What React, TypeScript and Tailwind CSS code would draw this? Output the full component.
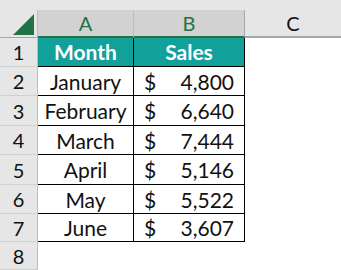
import React from "react";

const rows = [
  { m: "January", v: "4,800" },
  { m: "February", v: "6,640" },
  { m: "March", v: "7,444" },
  { m: "April", v: "5,146" },
  { m: "May", v: "5,522" },
  { m: "June", v: "3,607" },
];

const heights = ["h-[29px]", "h-[29px]", "h-[30px]", "h-[29px]", "h-[30px]", "h-[29px]", "h-[28px]", "h-[28px]"];

export default function App() {
  const font = { fontFamily: "Lato, 'Open Sans', sans-serif" };
  return (
    <div className="w-[341px] h-[270px] overflow-hidden bg-white text-[#111111]" style={font}>
      <div className="h-[10px] bg-[#e6e6e6]" />
      {/* column header */}
      <div className="flex h-[28px]">
        <div className="w-[38px] bg-[#e6e6e6] border-r border-[#bdbdbd] border-b border-b-[#a6a6a6] relative">
          <svg className="absolute left-[13px] top-[4px]" width="22" height="22" viewBox="0 0 22 22">
            <polygon points="0,21 21,21 21,0" fill="#217346" />
          </svg>
        </div>
        <div className="w-[96px] bg-[#d2d2d2] border-r border-[#bdbdbd] border-b-2 border-b-[#217346] flex items-center justify-center text-[20px] text-[#217346]">
          A
        </div>
        <div className="w-[111px] bg-[#d2d2d2] border-r border-[#a6a6a6] border-b-2 border-b-[#217346] flex items-center justify-center text-[20px] text-[#217346]">
          B
        </div>
        <div className="flex-1 bg-[#e6e6e6] border-b-2 border-b-[#a6a6a6] flex items-center justify-center text-[20px]">
          C
        </div>
      </div>
      {/* body */}
      {Array.from({ length: 8 }).map((_, i) => {
        const isHead = i === 0;
        const d = i >= 1 && i <= 6 ? rows[i - 1] : null;
        const inTable = i <= 6;
        return (
          <div key={i} className={`flex ${heights[i]}`}>
            <div className="w-[38px] shrink-0 bg-[#e6e6e6] border-r border-[#bdbdbd] border-b border-b-[#d0d0d0] flex items-center justify-center text-[20px]">
              {i + 1}
            </div>
            {isHead ? (
              <>
                <div className="w-[96px] shrink-0 bg-[#12a09a] border-r border-b border-black flex items-center justify-center text-white font-bold text-[21px]">
                  Month
                </div>
                <div className="w-[111px] shrink-0 bg-[#12a09a] border-r border-b border-black flex items-center justify-center text-white font-bold text-[21px]">
                  Sales
                </div>
              </>
            ) : inTable && d ? (
              <>
                <div className="w-[96px] shrink-0 border-r border-b border-black flex items-center justify-center text-[21px] pt-[1px]">
                  {d.m}
                </div>
                <div className="w-[111px] shrink-0 border-r border-b border-black flex items-center justify-between pl-[10px] pr-[10px] text-[21px] pt-[1px]">
                  <span>$</span>
                  <span>{d.v}</span>
                </div>
              </>
            ) : (
              <div className="w-[207px] shrink-0" />
            )}
            <div className="flex-1" />
          </div>
        );
      })}
    </div>
  );
}
